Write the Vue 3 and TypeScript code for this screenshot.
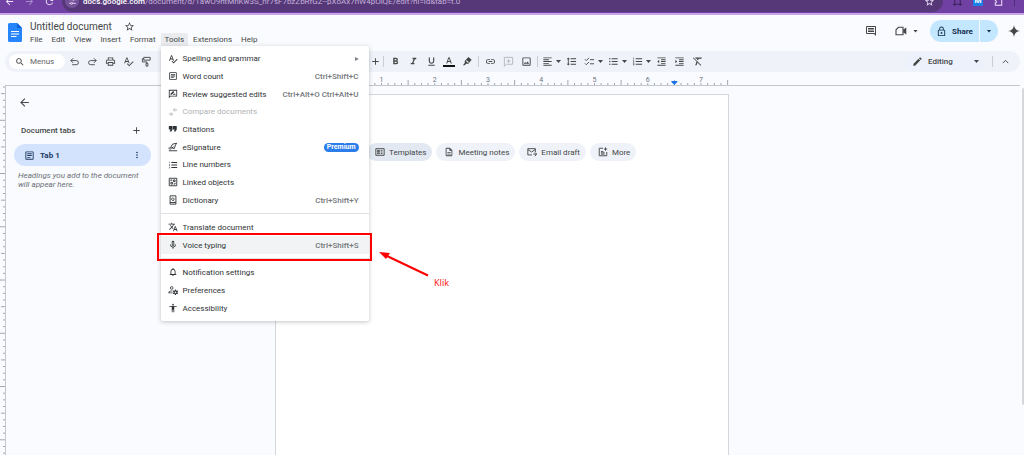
<script setup lang="ts">
import { computed, ref } from 'vue'

interface Glyph {
  d: string
  stroke?: boolean
}

interface MenuEntry {
  label: string
  icon: string
  keys?: string
  badge?: string
  submenu?: boolean
  disabled?: boolean
  active?: boolean
}

const glyphs: Record<string, Glyph> = {
  back: { d: 'M20 11H7.83l5.59-5.59L12 4l-8 8 8 8 1.41-1.41L7.83 13H20v-2z' },
  forward: { d: 'M12 4l-1.41 1.41L16.17 11H4v2h12.17l-5.58 5.59L12 20l8-8z' },
  reload: { d: 'M17.65 6.35A8 8 0 1 0 19.73 14h-2.08A6 6 0 1 1 12 6c1.66 0 3.14.69 4.22 1.78L13 11h7V4l-2.35 2.35z' },
  tune: { d: 'M3 7h9M17 7h4M3 17h4M12 17h9M14.500 4.500a2.500 2.500 0 1 0 .01 0M9.500 14.500a2.500 2.500 0 1 0 .01 0', stroke: true },
  star: { d: 'M22 9.240l-7.190-.620L12 2 9.190 8.630 2 9.240l5.460 4.730L5.820 21 12 17.270 18.180 21l-1.630-7.030L22 9.240zM12 15.400l-3.760 2.270 1-4.280-3.320-2.880 4.380-.380L12 6.100l1.710 4.040 4.380.380-3.320 2.880 1 4.280L12 15.400z' },
  frame: { d: 'M6 2v20M18 2v20M2 6h20M2 18h20', stroke: true },
  puzzle: { d: 'M5 6h5a2.500 2.500 0 0 1 5 0h4v14H5v-5a2.500 2.500 0 0 0 0-5z', stroke: true },
  search: { d: 'M15.500 14h-.790l-.280-.270A6.470 6.470 0 0 0 16 9.500 6.500 6.500 0 1 0 9.500 16c1.610 0 3.090-.590 4.230-1.570l.270.280v.790l5 4.990L20.490 19l-4.990-5zm-6 0a4.500 4.500 0 1 1 0-9 4.500 4.500 0 0 1 0 9z' },
  undo: { d: 'M9 5L4 10l5 5M4 10h12a4.500 4.500 0 0 1 0 9H7', stroke: true },
  redo: { d: 'M15 5l5 5-5 5M20 10H8a4.500 4.500 0 0 0 0 9h9', stroke: true },
  print: { d: 'M19 8h-1V3H6v5H5c-1.660 0-3 1.340-3 3v6h4v4h12v-4h4v-6c0-1.660-1.340-3-3-3zM8 5h8v3H8V5zm8 14H8v-4h8v4zm4-4h-2v-2H6v2H4v-4c0-.550.450-1 1-1h14c.550 0 1 .450 1 1v4z' },
  spell: { d: 'M12.450 16h2.090L9.430 3H7.570L2.460 16h2.090l1.120-3h5.640l1.140 3zm-6.020-5L8.500 5.480 10.570 11H6.430zm15.160.590l-8.090 8.090L9.830 16l-1.410 1.410 5.090 5.090L23 13l-1.410-1.410z' },
  paint: { d: 'M6 3h14v6H6zM6 6H3v7h10v3M11 16h4v6h-4z', stroke: true },
  plus: { d: 'M19 13h-6v6h-2v-6H5v-2h6V5h2v6h6v2z' },
  bold: { d: 'M15.600 10.790c.970-.670 1.650-1.770 1.650-2.790 0-2.260-1.750-4-4-4H7v14h7.040c2.090 0 3.710-1.700 3.710-3.790 0-1.520-.860-2.820-2.150-3.420zM10 6.500h3c.830 0 1.500.670 1.500 1.500s-.670 1.500-1.500 1.500h-3v-3zm3.500 9H10v-3h3.500c.830 0 1.500.670 1.500 1.500s-.670 1.500-1.500 1.500z' },
  italic: { d: 'M10 4v3h2.210l-3.420 8H6v3h8v-3h-2.210l3.420-8H18V4z' },
  underline: { d: 'M12 17c3.310 0 6-2.690 6-6V3h-2.500v8c0 1.930-1.570 3.500-3.500 3.500S8.500 12.930 8.500 11V3H6v8c0 3.310 2.690 6 6 6zm-7 2v2h14v-2H5z' },
  color: { d: 'M4.500 20h2.800l1.400-4h6.600l1.400 4h2.800L13.500 3h-3zM9.500 13.600L12 6.200l2.500 7.400z' },
  highlight: { d: 'M14 2l7 6-7 9H9l-3 3H2l4-5v-4zM8.500 11l5 4 1.500-2-5-4z' },
  link: { d: 'M3.900 12c0-1.710 1.390-3.100 3.100-3.100h4V7H7a5 5 0 0 0 0 10h4v-1.900H7c-1.710 0-3.100-1.390-3.100-3.100zM8 13h8v-2H8v2zm9-6h-4v1.900h4a3.100 3.100 0 0 1 0 6.200h-4V17h4a5 5 0 0 0 0-10z' },
  addcomment: { d: 'M3 3h18v15H8l-5 4zM12 7v8M8 11h8', stroke: true },
  image: { d: 'M19 5v14H5V5h14m0-2H5a2 2 0 0 0-2 2v14a2 2 0 0 0 2 2h14a2 2 0 0 0 2-2V5a2 2 0 0 0-2-2zm-4.860 8.860l-3 3.870L9 13.140 6 17h12l-3.860-5.140z' },
  align: { d: 'M15 15H3v2h12v-2zm0-8H3v2h12V7zM3 13h18v-2H3v2zm0 8h18v-2H3v2zM3 3v2h18V3H3z' },
  spacing: { d: 'M6 7h2.500L5 3.500 1.500 7H4v10H1.500L5 20.500 8.500 17H6V7zm4-2v2h12V5H10zm0 14h12v-2H10v2zm0-6h12v-2H10v2z' },
  checklist: { d: 'M13 8h9M13 17h9M2 7l3 3 6-6M2 16l3 3 6-6', stroke: true },
  bullets: { d: 'M4 10.500a1.500 1.500 0 1 0 0 3 1.500 1.500 0 0 0 0-3zm0-6a1.500 1.500 0 1 0 0 3 1.500 1.500 0 0 0 0-3zm0 12a1.500 1.500 0 1 0 0 3 1.500 1.500 0 0 0 0-3zM8 19h13v-2H8v2zm0-6h13v-2H8v2zm0-8v2h13V5H8z' },
  numbers: { d: 'M2 17h2v.500H3v1h1v.500H2v1h3v-4H2v1zm1-9h1V4H2v1h1v3zm-1 3h1.800L2 13.100v.900h3v-1H3.200L5 10.900V10H2v1zm6-6v2h14V5H8zm0 14h14v-2H8v2zm0-6h14v-2H8v2z' },
  outdent: { d: 'M11 17h10v-2H11v2zm-8-5l4 4V8l-4 4zm0 9h18v-2H3v2zM3 3v2h18V3H3zm8 6h10V7H11v2zm0 4h10v-2H11v2z' },
  indent: { d: 'M3 21h18v-2H3v2zM3 8v8l4-4-4-4zm8 9h10v-2H11v2zM3 3v2h18V3H3zm8 6h10V7H11v2zm0 4h10v-2H11v2z' },
  clear: { d: 'M3.270 3L2 4.270l7.970 7.970L7 20h3l2.070-5.660L18.730 21 20 19.730zM6 3l3 3h2.500l-.600 1.500 2.200 2.200L14.500 6H21V3z' },
  pencil: { d: 'M3 17.250V21h3.750L17.810 9.940l-3.750-3.750L3 17.250zM20.710 7.040a1 1 0 0 0 0-1.410l-2.340-2.340a1 1 0 0 0-1.410 0l-1.830 1.830 3.750 3.750 1.830-1.830z' },
  chevron: { d: 'M6 15.500l6-6 6 6', stroke: true },
  comment: { d: 'M21.990 4c0-1.100-.890-2-1.990-2H4a2 2 0 0 0-2 2v12a2 2 0 0 0 2 2h14l4 4-.010-18zM20 4v13.170L18.830 16H4V4h16zM6 12h12v2H6zm0-3h12v2H6zm0-3h12v2H6z' },
  video: { d: 'M7 4.500h9v15H2v-10zM16 11l3-2v6l-3-2zM20 8l1.500-1v10L20 16z', stroke: true },
  lock: { d: 'M18 8h-1V6A5 5 0 0 0 7 6v2H6a2 2 0 0 0-2 2v10a2 2 0 0 0 2 2h12a2 2 0 0 0 2-2V10a2 2 0 0 0-2-2zM9 6a3 3 0 0 1 6 0v2H9V6zm9 14H6V10h12v10zm-6-3a2 2 0 1 0 0-4 2 2 0 0 0 0 4z' },
  spark: { d: 'M12 0C13 7.500 16.500 11 24 12 16.500 13 13 16.500 12 24 11 16.500 7.500 13 0 12 7.500 11 11 7.500 12 0z' },
  article: { d: 'M19 5v14H5V5h14m0-2H5a2 2 0 0 0-2 2v14a2 2 0 0 0 2 2h14a2 2 0 0 0 2-2V5a2 2 0 0 0-2-2zM14 17H7v-2h7v2zm3-4H7v-2h10v2zm0-4H7V7h10v2z' },
  kebab: { d: 'M12 8a2 2 0 1 0 0-4 2 2 0 0 0 0 4zm0 2a2 2 0 1 0 0 4 2 2 0 0 0 0-4zm0 6a2 2 0 1 0 0 4 2 2 0 0 0 0-4z' },
  review: { d: 'M2 2h20v16H6l-4 4V2zm2 2v13.200L5.200 16H20V4zM6 14v-2.500l6.500-6.500 2.500 2.500L8.500 14zM11 14l2.500-2.500H18V14z' },
  compare: { d: 'M2 17h9M7 13l4 4-4 4M22 7h-9M17 3l-4 4 4 4', stroke: true },
  quote: { d: 'M4 18h4l3-5V5H2v8h4zm10 0h4l3-5V5h-9v8h4z' },
  signature: { d: 'M21 3L11 5 6 14h4l5 2 3-9zM3 13c-3 4 2 4 4 4M2 21h20M13 11l-4 5', stroke: true },
  objects: { d: 'M3 3h18v18H3zM7 13h4v4H7zM13 7h4v4h-4zM7 10V7h3M17 14v3h-3', stroke: true },
  dictionary: { d: 'M5 2h14v20H5zM5 18h14M15 15l-2-2M11.500 7a3 3 0 1 0 .010 0', stroke: true },
  translate: { d: 'M12.870 15.070l-2.540-2.510.030-.030A17.500 17.500 0 0 0 14.070 6H17V4h-7V2H8v2H1v2h11.170C11.500 7.920 10.440 9.750 9 11.350 8.070 10.320 7.300 9.190 6.690 8h-2c.730 1.630 1.730 3.170 2.980 4.560l-5.090 5.020L4 19l5-5 3.110 3.110.760-2.040zM18.500 10h-2L12 22h2l1.120-3h4.750L21 22h2l-4.500-12zm-2.620 7l1.620-4.330L19.120 17h-3.240z' },
  mic: { d: 'M12 14c1.660 0 3-1.340 3-3V5a3 3 0 0 0-6 0v6c0 1.660 1.340 3 3 3zm-1-9a1 1 0 0 1 2 0v6a1 1 0 0 1-2 0V5zm6 6a5 5 0 0 1-10 0H5c0 3.530 2.610 6.430 6 6.920V21h2v-3.080c3.390-.490 6-3.390 6-6.920h-2z' },
  bell: { d: 'M12 22a2 2 0 0 0 2-2h-4a2 2 0 0 0 2 2zm6-6v-5c0-3.070-1.630-5.640-4.500-6.320V4a1.500 1.500 0 0 0-3 0v.680C7.640 5.360 6 7.920 6 11v5l-2 2v1h16v-1l-2-2zm-2 1H8v-6c0-2.480 1.510-4.500 4-4.500s4 2.020 4 4.500v6z' },
  preferences: { d: 'M9 3a4 4 0 1 0 0 8 4 4 0 0 0 0-8zm0 2a2 2 0 1 1 0 4 2 2 0 0 1 0-4zm2 8c-4 0-10 1-10 5v2h10v-2H3c0-2 4-3 8-3zm6-2h2l.500 2 1.800 1 2-.600 1 1.700-1.500 1.400v2l1.500 1.400-1 1.700-2-.600-1.800 1-.500 2h-2l-.500-2-1.800-1-2 .600-1-1.700 1.500-1.400v-2l-1.500-1.400 1-1.700 2 .600 1.800-1zm1 4.500a2 2 0 1 0 0 4 2 2 0 0 0 0-4z' },
  accessibility: { d: 'M12 2a2 2 0 1 1 0 4 2 2 0 0 1 0-4zm9 7h-6v13h-2v-6h-2v6H9V9H3V7h18v2z' },
  templates: { d: 'M2 4h20v16H2zM6 8h5v3H6zM6 14h5v2H6zM14 8h4M14 12h4M14 16h4', stroke: true },
  notes: { d: 'M8 16h8v2H8zm0-4h8v2H8zm6-10H6a2 2 0 0 0-2 2v16a2 2 0 0 0 2 2h12a2 2 0 0 0 2-2V8l-6-6zm4 18H6V4h7v5h5v11z' },
  email: { d: 'M12 19H2V4h18v8M2 6l9 6 9-6M15 17h8M19 13l4 4-4 5', stroke: true },
  more: { d: 'M12 3H3v18h18v-9M7 11h6M7 14h9M7 17h9M18 1v8M14 5h8', stroke: true },
}

const documentTitle = ref('Untitled document')
const search = ref('')

const menus = ['File', 'Edit', 'View', 'Insert', 'Format', 'Tools', 'Extensions', 'Help']

const sections: MenuEntry[][] = [
  [
    { label: 'Spelling and grammar', icon: 'spell', submenu: true },
    { label: 'Word count', icon: 'article', keys: 'Ctrl+Shift+C' },
    { label: 'Review suggested edits', icon: 'review', keys: 'Ctrl+Alt+O Ctrl+Alt+U' },
    { label: 'Compare documents', icon: 'compare', disabled: true },
    { label: 'Citations', icon: 'quote' },
    { label: 'eSignature', icon: 'signature', badge: 'Premium' },
    { label: 'Line numbers', icon: 'numbers' },
    { label: 'Linked objects', icon: 'objects' },
    { label: 'Dictionary', icon: 'dictionary', keys: 'Ctrl+Shift+Y' },
  ],
  [
    { label: 'Translate document', icon: 'translate' },
    { label: 'Voice typing', icon: 'mic', keys: 'Ctrl+Shift+S', active: true },
  ],
  [
    { label: 'Notification settings', icon: 'bell' },
    { label: 'Preferences', icon: 'preferences' },
    { label: 'Accessibility', icon: 'accessibility' },
  ],
]

const historyTools = ['undo', 'redo', 'print', 'spell', 'paint']
const textTools = ['bold', 'italic', 'underline', 'color', 'highlight']
const insertTools = ['link', 'addcomment', 'image']
const listTools = ['checklist', 'bullets', 'numbers']
const indentTools = ['outdent', 'indent', 'clear']

const chips = [
  { label: 'Templates', icon: 'templates', strong: true },
  { label: 'Meeting notes', icon: 'notes' },
  { label: 'Email draft', icon: 'email' },
  { label: 'More', icon: 'more' },
]

const inch = 53.25
const inches = [1, 2, 3, 4, 5, 6, 7]

const rulerTicks = computed(() =>
  Array.from({ length: 69 }, (_, i) => ({
    at: (i * inch) / 8,
    size: i % 8 === 4 || i === 68 ? 5 : 2,
  })),
)

const sideTicks = computed(() =>
  Array.from({ length: 160 }, (_, i) => ({
    at: 1 + (i * inch) / 8,
    size: i % 8 === 5 ? 5 : i % 8 === 1 ? 4 : 2,
  })),
)
</script>

<template>
  <div class="app">
    <div class="browser">
      <div class="browser-row">
        <button class="nav" aria-label="Back"><svg viewBox="0 0 24 24"><path :d="glyphs.back.d" /></svg></button>
        <button class="nav dim" aria-label="Forward"><svg viewBox="0 0 24 24"><path :d="glyphs.forward.d" /></svg></button>
        <button class="nav" aria-label="Reload"><svg viewBox="0 0 24 24"><path :d="glyphs.reload.d" /></svg></button>
        <div class="address">
          <span class="site"><svg viewBox="0 0 24 24" class="line"><path :d="glyphs.tune.d" /></svg></span>
          <span class="url"><b>docs.google.com</b>/document/d/1awO9htMnKw3S_nr7sF7bzZbRfGZ--pXoAx7nW4pOlQE/edit?hl=id&amp;tab=t.0</span>
          <svg viewBox="0 0 24 24"><path :d="glyphs.star.d" /></svg>
        </div>
        <div class="extensions">
          <svg viewBox="0 0 24 24" class="line dark"><path :d="glyphs.frame.d" /></svg>
          <span class="ext">M</span>
          <svg viewBox="0 0 24 24" class="line"><path :d="glyphs.puzzle.d" /></svg>
          <i></i>
        </div>
      </div>
    </div>

    <header class="header">
      <svg class="logo" viewBox="0 0 14 19" aria-label="Docs">
        <path d="M1.500 0H9l5 5v12.500a1.500 1.500 0 0 1-1.500 1.500h-11A1.500 1.500 0 0 1 0 17.500v-16A1.500 1.500 0 0 1 1.500 0z" fill="#2684fc" />
        <path d="M9 0l5 5H10a1 1 0 0 1-1-1z" fill="#0d5fd6" />
        <path d="M3 8.500h8M3 11h8M3 13.500h5.500" stroke="#fff" stroke-width="1.200" />
      </svg>
      <div class="heading">
        <div class="title-row">
          <input v-model="documentTitle" class="title" aria-label="Document title" />
          <button class="star" aria-label="Star"><svg viewBox="0 0 24 24"><path :d="glyphs.star.d" /></svg></button>
        </div>
        <nav class="menubar">
          <div v-for="name in menus" :key="name" class="menu-slot">
            <button class="menu-title" :class="{ open: name === 'Tools' }">{{ name }}</button>
            <div v-if="name === 'Tools'" class="dropdown" role="menu">
              <ul v-for="(section, s) in sections" :key="s" :class="{ compact: s === 0 }">
                <li v-for="item in section" :key="item.label">
                  <button class="entry" role="menuitem" :class="{ active: item.active }" :disabled="item.disabled">
                    <svg viewBox="0 0 24 24" :class="{ line: glyphs[item.icon].stroke }"><path :d="glyphs[item.icon].d" /></svg>
                    <span class="label">{{ item.label }}</span>
                    <span v-if="item.keys" class="keys">{{ item.keys }}</span>
                    <span v-if="item.badge" class="badge">{{ item.badge }}</span>
                    <i v-if="item.submenu" class="arrow"></i>
                  </button>
                  <div v-if="item.active" class="marker"></div>
                </li>
              </ul>
            </div>
          </div>
        </nav>
      </div>
      <div class="actions">
        <button class="action" aria-label="Comments"><svg viewBox="0 0 24 24"><path :d="glyphs.comment.d" /></svg></button>
        <button class="action video" aria-label="Join a call"><svg viewBox="0 0 24 24" class="line"><path :d="glyphs.video.d" /></svg><i class="caret"></i></button>
        <div class="share">
          <button class="share-main"><svg viewBox="0 0 24 24"><path :d="glyphs.lock.d" /></svg>Share</button>
          <button class="share-more" aria-label="Share options"><i class="caret"></i></button>
        </div>
        <button class="action spark" aria-label="Assistant"><svg viewBox="0 0 24 24"><path :d="glyphs.spark.d" /></svg></button>
      </div>
    </header>

    <div class="toolbar">
      <label class="search">
        <svg viewBox="0 0 24 24"><path :d="glyphs.search.d" /></svg>
        <input v-model="search" placeholder="Menus" aria-label="Search the menus" />
      </label>
      <div class="history">
        <button v-for="t in historyTools" :key="t" class="tool" :aria-label="t">
          <svg viewBox="0 0 24 24" :class="{ line: glyphs[t].stroke }"><path :d="glyphs[t].d" /></svg>
        </button>
      </div>
      <button class="tool step" aria-label="Increase font size"><svg viewBox="0 0 24 24"><path :d="glyphs.plus.d" /></svg></button>
      <i class="rule"></i>
      <button v-for="t in textTools" :key="t" class="tool" :aria-label="t">
        <svg viewBox="0 0 24 24" :class="t"><path :d="glyphs[t].d" /></svg>
      </button>
      <i class="rule"></i>
      <button v-for="t in insertTools" :key="t" class="tool" :aria-label="t" :disabled="t === 'addcomment'">
        <svg viewBox="0 0 24 24" :class="{ line: glyphs[t].stroke }"><path :d="glyphs[t].d" /></svg>
      </button>
      <i class="rule"></i>
      <button class="tool wide first" aria-label="align"><svg viewBox="0 0 24 24"><path :d="glyphs.align.d" /></svg><i class="caret"></i></button>
      <button class="tool" aria-label="Line spacing"><svg viewBox="0 0 24 24"><path :d="glyphs.spacing.d" /></svg></button>
      <button v-for="t in listTools" :key="t" class="tool wide" :aria-label="t">
        <svg viewBox="0 0 24 24" :class="{ line: glyphs[t].stroke }"><path :d="glyphs[t].d" /></svg><i class="caret"></i>
      </button>
      <button v-for="t in indentTools" :key="t" class="tool" :aria-label="t">
        <svg viewBox="0 0 24 24"><path :d="glyphs[t].d" /></svg>
      </button>
      <button class="mode"><svg viewBox="0 0 24 24"><path :d="glyphs.pencil.d" /></svg><span>Editing</span><i class="caret"></i></button>
      <i class="rule"></i>
      <button class="tool fold" aria-label="Hide the menus"><svg viewBox="0 0 24 24" class="line"><path :d="glyphs.chevron.d" /></svg></button>
    </div>

    <div class="ruler">
      <svg class="scale" width="454" height="13">
        <line v-for="t in rulerTicks" :key="t.at" :x1="t.at" :x2="t.at" :y1="13 - t.size" y2="13" />
        <text v-for="n in inches" :key="n" :x="(n + 1) * inch" y="10">{{ n }}</text>
        <path :d="`M${7.5 * inch - 3} 9h6v1l-3 3-3-3z`" />
      </svg>
    </div>

    <main class="workspace">
      <svg class="side-scale">
        <line v-for="t in sideTicks" :key="t.at" :x1="5 - t.size" x2="5" :y1="t.at" :y2="t.at" />
      </svg>
      <aside class="sidebar">
        <button class="collapse" aria-label="Close outline"><svg viewBox="0 0 24 24"><path :d="glyphs.back.d" /></svg></button>
        <div class="tabs-head">
          <h2>Document tabs</h2>
          <button aria-label="Add tab"><svg viewBox="0 0 24 24"><path :d="glyphs.plus.d" /></svg></button>
        </div>
        <div class="tab">
          <svg viewBox="0 0 24 24"><path :d="glyphs.article.d" /></svg>
          <a href="#tab-1">Tab 1</a>
          <button aria-label="Tab options"><svg viewBox="0 0 24 24"><path :d="glyphs.kebab.d" /></svg></button>
        </div>
        <p>Headings you add to the document will appear here.</p>
      </aside>
      <article class="page">
        <div class="chips">
          <button v-for="c in chips" :key="c.label" class="chip" :class="{ strong: c.strong }">
            <svg viewBox="0 0 24 24" :class="{ line: glyphs[c.icon].stroke }"><path :d="glyphs[c.icon].d" /></svg>{{ c.label }}
          </button>
        </div>
        <div class="note">
          <svg viewBox="0 0 50 26" width="50" height="26">
            <path d="M8 5l41 19.500" stroke="#ff0000" stroke-width="2" />
            <path d="M0 1l11 1-4 6z" fill="#ff0000" />
          </svg>
          <span>Klik</span>
        </div>
      </article>
      <div class="scrollbar"></div>
    </main>
  </div>
</template>

<style>
body {
  margin: 0;
  background: #f9fbfd;
}
</style>

<style scoped>
.app {
  display: flex;
  flex-direction: column;
  height: 100vh;
  overflow: hidden;
  background: #f9fbfe;
  color: #444746;
  font-family: Roboto, "Liberation Sans", sans-serif;
  font-size: 8px;
}
button,
input {
  margin: 0;
  padding: 0;
  border: 0;
  background: none;
  color: inherit;
  font: inherit;
}
button {
  display: flex;
  align-items: center;
  justify-content: center;
  white-space: nowrap;
}
svg {
  flex: none;
  width: 11px;
  height: 11px;
  fill: currentColor;
}
svg.line {
  fill: none;
  stroke: currentColor;
  stroke-width: 2.200;
}
.caret {
  flex: none;
  width: 5px;
  height: 3px;
  background: currentColor;
  clip-path: polygon(0 0, 100% 0, 50% 100%);
}

.browser {
  flex: none;
  height: 13px;
  overflow: hidden;
  border-bottom: 2px solid #c5a5e8;
  background: #7040a3;
  color: #eee3fa;
}
.browser-row {
  display: flex;
  align-items: center;
  height: 22px;
  margin-top: -10px;
  padding-left: 2px;
}
.nav {
  width: 14px;
  margin-right: 6px;
}
.nav.dim {
  color: #a88bc8;
}
.address {
  display: flex;
  flex: 1;
  align-items: center;
  height: 22px;
  margin-right: 9px;
  padding: 0 8px 0 3px;
  border-radius: 11px;
  background: #563878;
}
.site {
  display: flex;
  align-items: center;
  justify-content: center;
  width: 14px;
  height: 14px;
  margin-right: 4px;
  border-radius: 7px;
  background: #74529a;
}
.site svg {
  width: 9px;
  height: 9px;
}
.url {
  flex: 1;
  color: #c4b0da;
  font-size: 8px;
  white-space: nowrap;
}
.url b {
  color: #fff;
  font-weight: 500;
}
.extensions {
  display: flex;
  gap: 10px;
  align-items: center;
  width: 72px;
}
.extensions .dark {
  color: #3c2360;
}
.ext {
  width: 10px;
  background: #1a80e8;
  color: #fff;
  font-weight: 700;
  line-height: 10px;
  text-align: center;
}
.extensions i {
  width: 1px;
  height: 10px;
  background: #4e2c78;
}

.header {
  display: flex;
  flex: none;
  height: 31px;
  padding: 5px 4px 0 8px;
}
.logo {
  width: 14px;
  height: 19px;
  margin-top: 3px;
}
.heading {
  margin-left: 4px;
}
.title-row {
  display: flex;
  align-items: center;
  height: 13px;
  padding-left: 4px;
}
.title {
  width: 94px;
  font-size: 10px;
  line-height: 13px;
}
.menubar {
  display: flex;
  gap: 1px;
}
.menu-slot {
  position: relative;
}
.menu-title {
  height: 13px;
  padding: 0 4px;
  border-radius: 2px 2px 0 0;
}
.menu-title.open {
  background: #e9ebee;
}
.dropdown {
  position: absolute;
  z-index: 5;
  top: 100%;
  left: 0;
  box-sizing: border-box;
  width: 208px;
  padding: 4px 0;
  border-radius: 2px;
  background: #fff;
  box-shadow: 0 1px 4px rgba(60, 64, 67, 0.3);
}
.dropdown ul {
  display: grid;
  grid-auto-rows: 18px;
  margin: 0;
  padding: 0;
  list-style: none;
}
.dropdown ul.compact {
  grid-auto-rows: 1fr;
  height: 159px;
}
.dropdown ul + ul {
  margin-top: 4px;
  padding-top: 4px;
  border-top: 1px solid #dfe1e4;
}
.dropdown li {
  position: relative;
  display: flex;
}
.entry {
  flex: 1;
  padding: 0 10px 0 7px;
  color: #303336;
}
.entry svg {
  width: 10px;
  height: 10px;
}
.entry.active {
  background: #f1f3f4;
}
.entry:disabled {
  color: #b0b2b5;
}
.label {
  flex: 1;
  margin-left: 5px;
  text-align: left;
}
.keys {
  color: #74787c;
  font-weight: 500;
}
.badge {
  padding: 0 3px;
  border-radius: 5px;
  background: #2b7de9;
  color: #fff;
  font-size: 7px;
  font-weight: 700;
  line-height: 9px;
}
.arrow {
  border: 2px solid transparent;
  border-left: 4px solid #80868b;
  border-right: 0;
}
.marker {
  position: absolute;
  inset: -3px -3px -7px -4px;
  border: 2px solid #ff0000;
  pointer-events: none;
}

.actions {
  display: flex;
  align-items: center;
  height: 22px;
  margin-left: auto;
}
.action svg {
  width: 12px;
  height: 12px;
}
.action.video {
  gap: 6px;
  margin: 0 12px 0 18px;
}
.share {
  display: flex;
  height: 22px;
  overflow: hidden;
  border-radius: 11px;
  background: #c2e7ff;
  color: #17304e;
}
.share-main {
  gap: 5px;
  width: 50px;
  border-right: 1px solid #f4faff;
  font-weight: 700;
}
.share-more {
  width: 18px;
}
.action.spark {
  margin-left: 10px;
}

.toolbar {
  display: flex;
  flex: none;
  align-items: center;
  height: 21px;
  margin: 0 4px 0 5px;
  padding: 0 9px 0 4px;
  border-radius: 11px;
  background: #eff2f9;
}
.search {
  display: flex;
  gap: 5px;
  align-items: center;
  box-sizing: border-box;
  width: 56px;
  height: 15px;
  padding-left: 6px;
  border-radius: 8px;
  background: #fff;
}
.search input {
  width: 34px;
}
.search input::placeholder {
  color: #5f6368;
  opacity: 1;
}
.search svg {
  width: 10px;
  height: 10px;
}
.history {
  display: flex;
  width: 304px;
}
.tool {
  flex: none;
  width: 18px;
  height: 18px;
}
.tool:disabled {
  color: #b3b6ba;
}
.tool svg.color {
  width: 12px;
  height: 9px;
  border-bottom: 2px solid #111;
}
.tool.step,
.tool.fold {
  width: 12px;
}
.tool.wide {
  gap: 3px;
  justify-content: flex-start;
  width: 24px;
  padding-left: 4px;
}
.tool.wide.first {
  width: 22px;
  padding-left: 2px;
}
.tool svg.line {
  stroke-width: 2;
}
.rule {
  flex: none;
  width: 1px;
  height: 11px;
  margin: 0 2px;
  background: #c9ccd3;
}
.mode {
  height: 18px;
  margin-left: auto;
  margin-right: 5px;
  padding: 0 6px 0 7px;
  border-radius: 9px;
  background: #edf1fb;
  font-weight: 500;
}
.mode span {
  width: 46px;
  margin-left: 5px;
  text-align: left;
}
.fold {
  margin-left: 4px;
}

.ruler {
  flex: none;
  height: 13px;
  margin: 0 4px 0 5px;
  padding-left: 270px;
  border-bottom: 1px solid #c4c7cb;
}
.scale {
  display: block;
  width: 454px;
  height: 13px;
}
.scale line,
.side-scale line {
  stroke: #a3a7ad;
}
.scale text {
  fill: #6a7280;
  font-size: 7px;
  text-anchor: middle;
}
.scale path {
  fill: #1a73e8;
}

.workspace {
  display: flex;
  flex: 1;
  min-height: 0;
}
.side-scale {
  width: 5px;
  height: 100%;
}
.sidebar {
  box-sizing: border-box;
  flex: none;
  width: 270px;
  padding: 10px 124px 0 8px;
  border-left: 1px solid #c4c7cb;
}
.collapse {
  margin-left: 4px;
}
.collapse svg {
  width: 13px;
  height: 13px;
}
.tabs-head {
  display: flex;
  align-items: center;
  justify-content: space-between;
  height: 14px;
  margin-top: 14px;
  padding: 0 9px 0 7px;
}
.tabs-head h2 {
  margin: 0;
  font-size: 8px;
  font-weight: 500;
}
.tab {
  display: flex;
  align-items: center;
  height: 22px;
  margin-top: 7px;
  padding: 0 9px 0 10px;
  border-radius: 11px;
  background: #d3e3fd;
  color: #1c3a63;
}
.tab a {
  flex: 1;
  margin-left: 5px;
  color: inherit;
  font-weight: 700;
  text-decoration: none;
}
.tab button svg {
  width: 10px;
  height: 10px;
}
.sidebar p {
  margin: 5px 0 0 4px;
  color: #6c7075;
  font-size: 8px;
  font-style: italic;
  line-height: 9px;
}
.page {
  position: relative;
  box-sizing: border-box;
  flex: none;
  width: 454px;
  margin-top: 8px;
  padding: 48px 0 0 91px;
  border: 1px solid #d3d6da;
  border-bottom: 0;
  background: #fff;
}
.chips {
  display: flex;
  gap: 4px;
}
.chip {
  gap: 4px;
  height: 18px;
  padding: 0 6px 0 8px;
  border-radius: 9px;
  background: #eff2f9;
}
.chip.strong {
  background: #e2e9f3;
}
.chip svg {
  width: 10px;
  height: 10px;
}
.note {
  position: absolute;
  top: 156px;
  left: 103px;
  display: flex;
  gap: 5px;
  align-items: flex-end;
  color: #ff2020;
  font-family: "Noto Sans", sans-serif;
  font-size: 9px;
}
.note svg {
  width: 50px;
  height: 26px;
  margin-bottom: 12px;
}
.scrollbar {
  width: 2px;
  height: 317px;
  margin: 2px 0 0 auto;
  border-radius: 2px 0 0 2px;
  background: #d5d7da;
}
</style>
